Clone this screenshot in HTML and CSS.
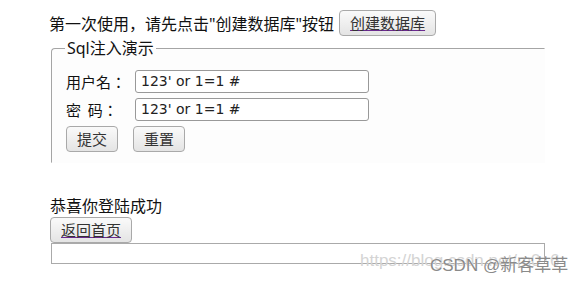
FILE: index.html
```html
<!doctype html>
<html>
<head>
<meta charset=utf-8>
<title>Sql注入演示</title>
<link rel="stylesheet" href="styles.css">
</head>

<body>

<main class="page">

  <p class="intro">
    <span>第一次使用，请先点击"创建数据库"按钮</span>
    <button class="btn"><a href="#">创建数据库</a></button>
  </p>

  <fieldset class="demo">
    <legend>Sql注入演示</legend>
    <div class="row">
      <label for="user">用户名：</label>
      <input id="user" type="text" value="123' or 1=1 #">
    </div>
    <div class="row">
      <label for="pass">密&nbsp;&nbsp;码：</label>
      <input id="pass" type="text" value="123' or 1=1 #">
    </div>
    <div class="actions">
      <button class="btn">提交</button>
      <button class="btn">重置</button>
    </div>
  </fieldset>

  <p class="result">恭喜你登陆成功</p>
  <button class="btn"><a href="#">返回首页</a></button>
  <div class="frame"></div>

</main>

<div class="watermark">
  <span class="url">https://blog.csdn.net/m0_6</span>
  <span class="mark">CSDN @新客草草</span>
</div>

</body>
</html>
```

FILE: styles.css
```css
body {
  margin: 0;
  padding: 0;
  background: #fff;
  color: #111;
  font-family: "Noto Sans", "Noto Sans CJK SC", sans-serif;
  font-size: 15px;
}

.page {
  padding: 10px 0 0 50px;
  width: 495px;
}

.intro {
  margin: 0 0 0 -1px;
  display: flex;
  align-items: center;
  gap: 5px;
  font-size: 16px;
  height: 25px;
}

.btn {
  font-family: "Noto Sans CJK SC", sans-serif;
  font-size: 15px;
  height: 26px;
  padding: 0 10px;
  color: #333;
  background: linear-gradient(#fafafa, #e4e4e4);
  border: 1px solid #a9a9a9;
  border-radius: 4px;
  line-height: 22px;
}

.btn a {
  color: #333;
  text-decoration: underline;
  text-decoration-color: #6b2a8f;
}

.demo {
  margin: 3px 0 0 1px;
  padding: 12px 0 10px 14px;
  border: 1px solid #a5a5a5;
  border-right-color: transparent;
  border-bottom-color: transparent;
  border-radius: 4px 0 0 0;
  background: #fdfdfd;
}

.demo legend {
  font-size: 16px;
  padding: 0 2px;
  margin-left: -1px;
  line-height: 20px;
}

.row {
  display: flex;
  align-items: center;
  height: 22px;
  margin-bottom: 6px;
}

.row label {
  width: 69px;
  font-family: "Noto Sans CJK TC", sans-serif;
}

.row input {
  box-sizing: border-box;
  width: 234px;
  height: 23px;
  padding: 0 5px;
  border: 1px solid #999;
  border-radius: 3px;
  font-family: "DejaVu Sans", sans-serif;
  font-size: 14px;
  color: #222;
}

.actions {
  display: flex;
  gap: 15px;
  margin-top: 1px;
}

.actions .btn {
  width: 52px;
  padding: 0;
}

.result {
  margin: 32px 0 2px 0;
  font-size: 16px;
  line-height: 20px;
  font-family: "Noto Sans CJK SC", sans-serif;
}

.frame {
  box-sizing: border-box;
  margin: 0 0 0 1px;
  height: 21px;
  border: 1px solid #aaa;
}

.watermark {
  position: absolute;
  left: 360px;
  top: 251px;
  font-family: "Liberation Sans", "Noto Sans CJK SC", sans-serif;
  font-size: 17px;
  white-space: nowrap;
}

.watermark .url {
  color: #d4d4d4;
}

.watermark .mark {
  position: absolute;
  left: 70px;
  top: 0;
  color: #8a8a8a;
  text-shadow: 0 0 1px #fff;
}
```
